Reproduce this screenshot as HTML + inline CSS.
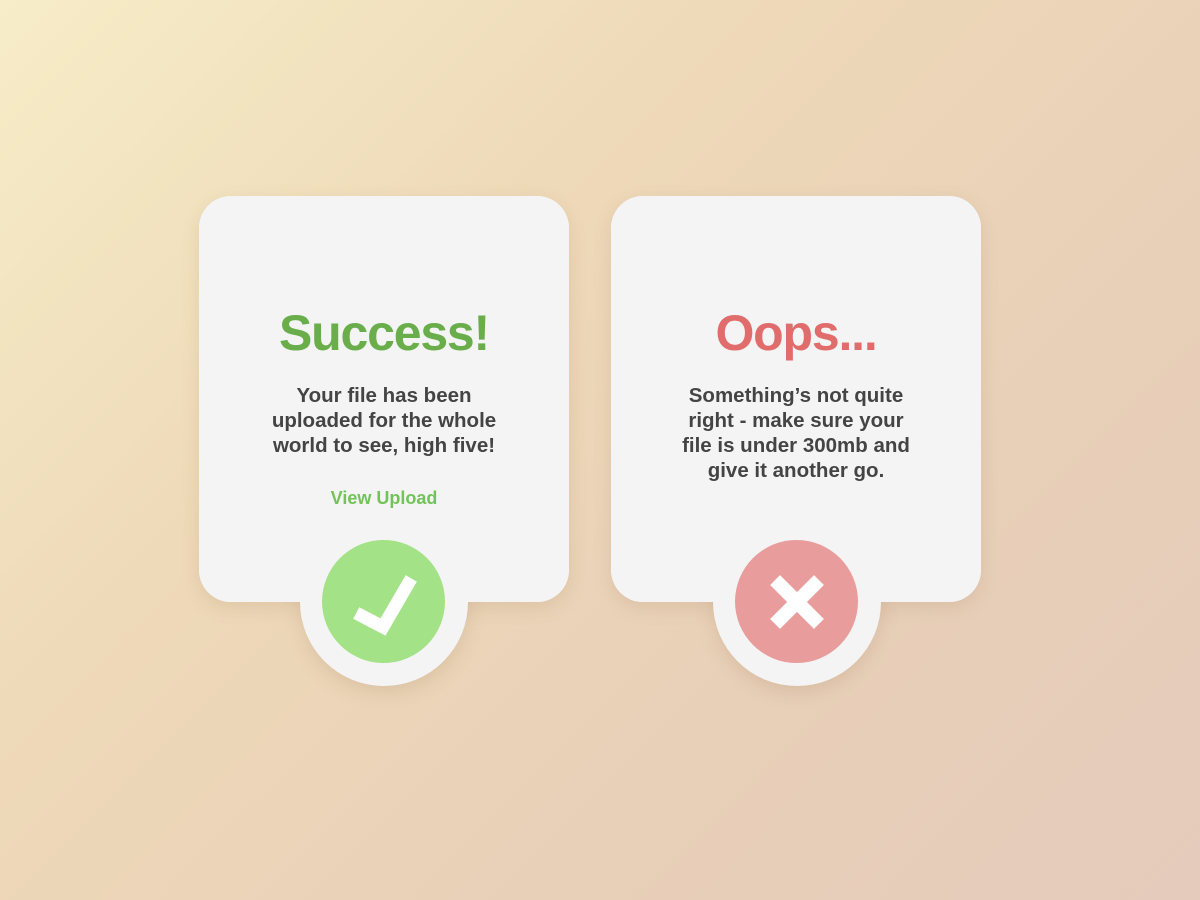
<!DOCTYPE html>
<html><head><meta charset="utf-8"><style>
html,body{margin:0;width:1200px;height:900px;overflow:hidden}
body{background:linear-gradient(135deg,#f7edc8 0%,#eed9b8 35%,#e8cfb8 70%,#e5cbbb 100%);font-family:"Liberation Sans",sans-serif;position:relative}
.tab{position:absolute;width:168px;height:168px;border-radius:50%;background:#f4f4f4;top:518px;box-shadow:0 6px 18px rgba(150,110,70,.18)}
.sh{position:absolute;top:196px;width:370px;height:406px;background:#f4f4f4;border-radius:32px;box-shadow:0 6px 18px rgba(150,110,70,.15)}
.cover{position:absolute;top:196px;width:370px;height:406px;background:#f4f4f4;border-radius:32px}
h1{margin:0;position:absolute;left:0;right:0;top:304px;font-size:50px;font-weight:bold;letter-spacing:-1.2px}
p{margin:0;position:absolute;left:0;right:0;top:383px;font-size:20.5px;line-height:25px;font-weight:bold;color:#444;letter-spacing:0}
.link{position:absolute;left:0;right:0;top:488px;font-size:18px;font-weight:bold;color:#74c25a}
.c{position:absolute;width:123px;height:123px;border-radius:50%;top:540px}
</style></head><body>
<div class="sh" style="left:199px"></div>
<div class="sh" style="left:611px"></div>
<div class="tab" style="left:300px"></div>
<div class="tab" style="left:713px"></div>
<div class="cover" style="left:199px"></div>
<div class="cover" style="left:611px"></div>
<div style="position:absolute;left:199px;top:0;width:370px;height:900px;text-align:center">
<h1 style="color:#6aae4c">Success!</h1>
<p>Your file has been<br>uploaded for the whole<br>world to see, high five!</p>
<div class="link">View Upload</div>
</div>
<div style="position:absolute;left:611px;top:0;width:370px;height:900px;text-align:center">
<h1 style="color:#e06c6c">Oops...</h1>
<p>Something’s not quite<br>right - make sure your<br>file is under 300mb and<br>give it another go.</p>
</div>
<div class="c" style="left:322px;background:#a3e286"></div>
<div class="c" style="left:735px;background:#e89c9c"></div>
<svg width="1200" height="900" style="position:absolute;left:0;top:0">
<polyline points="362,616 383,627 408,584" fill="none" stroke="#fff" stroke-width="13" stroke-linecap="square"/>
<path d="M780,585 L814,619 M814,585 L780,619" stroke="#fff" stroke-width="14" stroke-linecap="square"/>
</svg>
</body></html>
